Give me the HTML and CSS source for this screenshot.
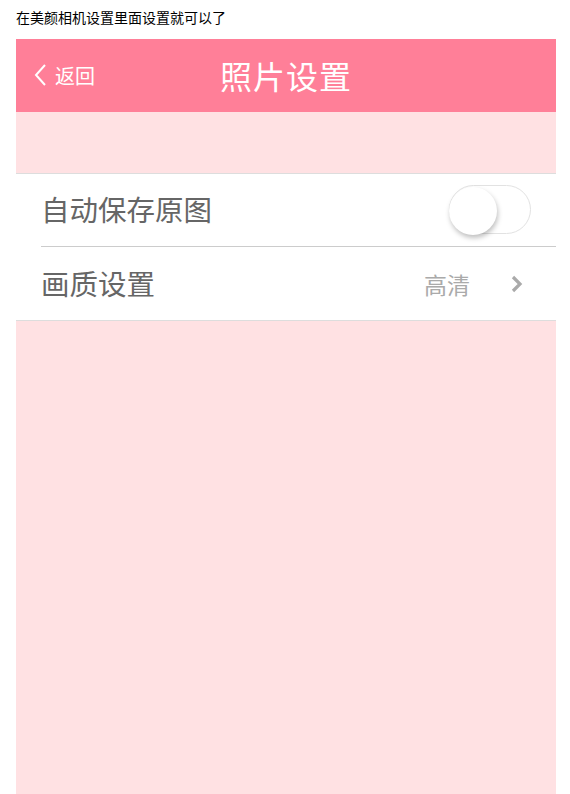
FILE: index.html
```html
<!DOCTYPE html>
<html>
<head>
<meta charset="utf-8">
<link rel="stylesheet" href="styles.css">
</head>
<body>
<p class="caption">在美颜相机设置里面设置就可以了</p>
<div class="phone">
  <div class="topbar">
    <div class="back">
      <svg class="back-icon" width="14" height="24" viewBox="0 0 14 24"><path d="M12 2 L3 12 L12 22" fill="none" stroke="#fff" stroke-width="2"/></svg>
      <span>返回</span>
    </div>
    <div class="title">照片设置</div>
  </div>
  <div class="spacer"></div>
  <div class="list">
    <div class="row">
      <span class="label">自动保存原图</span>
      <div class="toggle"><div class="knob"></div></div>
    </div>
    <div class="row">
      <span class="label">画质设置</span>
      <span class="value">高清</span>
      <svg class="chev" width="14" height="20" viewBox="0 0 14 20"><path d="M3 3 L10 10 L3 17" fill="none" stroke="#aaa" stroke-width="3.2"/></svg>
    </div>
  </div>
  <div class="rest"></div>
</div>
</body>
</html>
```
FILE: styles.css
```css
html, body { margin: 0; padding: 0; background: #fff; }
body { font-family: "Noto Sans CJK SC", "Noto Sans", sans-serif; }
.caption {
  margin: 0;
  padding: 7px 16px 0;
  height: 32px;
  font-size: 14px;
  line-height: 20px;
  color: #000;
}
.phone {
  margin: 0 14px 0 16px;
  width: 540px;
  background: #ffe1e3;
}
.topbar {
  height: 73px;
  background: #ff7f98;
  position: relative;
  display: flex;
  align-items: center;
  justify-content: center;
}
.back {
  position: absolute;
  left: 17px;
  top: 0;
  bottom: 0;
  display: flex;
  align-items: center;
  gap: 8px;
  color: #fff;
  font-size: 20px;
}
.back-icon { margin-top: -1px; }
.title {
  color: #fff;
  font-size: 32px;
  letter-spacing: 1px;
  margin-top: -2px;
}
.spacer { height: 61px; }
.list {
  background: #fff;
  border-top: 1px solid #ddd;
  border-bottom: 1px solid #ddd;
  padding-left: 25px;
}
.row {
  height: 72px;
  display: flex;
  align-items: center;
  padding-right: 25px;
}
.row + .row { border-top: 1px solid #ccc; height: 73px; }
.label {
  font-size: 28.5px;
  color: #666;
  flex: 1;
  margin-top: -3px;
}
.value {
  font-size: 23px;
  color: #aaa;
  margin-right: 40px;
}
.chev { margin-right: 7px; }
.toggle {
  width: 82px;
  height: 49px;
  border: 1px solid #e2e2e2;
  border-radius: 26px;
  box-sizing: border-box;
  position: relative;
  margin-top: -2px;
}
.knob {
  position: absolute;
  left: -1px;
  top: 1px;
  width: 48px;
  height: 48px;
  border-radius: 50%;
  background: #fff;
  box-shadow: 1px 3px 5px rgba(0,0,0,0.25);
}
.rest { height: 480px; }
```
